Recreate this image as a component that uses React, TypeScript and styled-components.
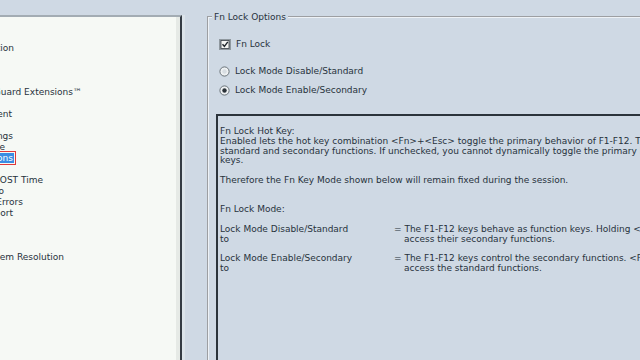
import styled, { createGlobalStyle } from 'styled-components';

const GlobalStyle = createGlobalStyle`
  html, body {
    margin: 0;
    padding: 0;
    background: #cfd9e4;
    overflow: hidden;
  }
  body {
    font-family: "DejaVu Sans", "Liberation Sans", sans-serif;
    font-size: 9px;
    color: #27323c;
  }
`;

const tree = [
    { id: 1, label: "General", end: 0 },
    { id: 2, label: "Boot Sequence", end: 0 },
    { id: 3, label: "System Configuration", end: 15 },
    { id: 4, label: "Video", end: 0 },
    { id: 5, label: "Security", end: 0 },
    { id: 6, label: "Secure Boot", end: 0 },
    { id: 7, label: "Intel Software Guard Extensions™", end: 83 },
    { id: 8, label: "Performance", end: 0 },
    { id: 9, label: "Power Management", end: 13 },
    { id: 10, label: "POST Behavior", end: 0 },
    { id: 11, label: "Adapter Warnings", end: 14 },
    { id: 12, label: "Numlock Enable", end: 6 },
    { id: 13, label: "Fn Lock Options", end: 14, selected: true },
    { id: 14, label: "Fastboot", end: 0 },
    { id: 15, label: "Extend BIOS POST Time", end: 44 },
    { id: 16, label: "Full Screen Logo", end: 5 },
    { id: 17, label: "Warnings and Errors", end: 24 },
    { id: 18, label: "Virtualization Support", end: 14 },
    { id: 19, label: "Wireless", end: 0 },
    { id: 20, label: "Maintenance", end: 0 },
    { id: 21, label: "System Logs", end: 0 },
    { id: 22, label: "SupportAssist System Resolution", end: 65 },
];

const Screen = styled.div`
    display: flex;
    align-items: flex-start;
    width: 640px;
    height: 360px;
    overflow: hidden;
`;

const TreePanel = styled.div`
    flex: 0 0 182px;
    box-sizing: border-box;
    margin-top: 15px;
    height: 360px;
    padding-top: 3px;
    background: #f6f9f5;
    border-top: 2px solid #a3acb3;
    border-right: 2px solid #343b43;
    box-shadow: inset -4px 0 0 #e6eae6, 3px 0 0 #dce4ea;
    overflow: hidden;
`;

const TreeRow = styled.div<{ $end: number }>`
    width: ${(p) => p.$end}px;
    height: 11px;
    line-height: 12px;
    display: flex;
    justify-content: flex-end;
    white-space: nowrap;
`;

const TreeLabel = styled.span<{ $selected?: boolean }>`
    flex-shrink: 0;
    padding-right: 1px;
    ${(p) => p.$selected && `
        background: #3a8de4;
        color: #ffffff;
        line-height: 10px;
        margin-top: 1px;
        height: 10px;
        outline: 1.5px solid #e0393b;
        outline-offset: 1px;
    `}
`;

const Group = styled.fieldset`
    flex: 0 0 auto;
    width: 520px;
    height: 400px;
    margin: 12px 0 0 25px;
    padding: 0 0 0 7px;
    border: 2px groove #eef2f6;
`;

const Legend = styled.legend`
    padding: 0 2px;
    margin-left: -4px;
    line-height: 10px;
`;

const OptionRow = styled.div<{ $gap: number }>`
    display: flex;
    align-items: center;
    gap: 5px;
    height: 12px;
    margin-top: ${(p) => p.$gap}px;
    padding-left: 3px;
    white-space: nowrap;
`;

const DescBox = styled.div`
    margin-top: 18px;
    height: 300px;
    border: 2px solid #2b333b;
    border-right: none;
    padding: 11px 0 0 2px;
    line-height: 9.8px;
    white-space: nowrap;
`;

const Blank = styled.div<{ $lines: number }>`
    height: ${(p) => p.$lines * 9.8}px;
`;

const ModeRow = styled.div`
    display: grid;
    grid-template-columns: 174px auto;
`;

const Indent = styled.div`
    padding-left: 10px;
`;

function CheckBox() {
    return (
        <svg width="12" height="11" viewBox="0 0 12 11">
            <rect x="0" y="0" width="12" height="11" fill="#8f989f" />
            <rect x="2" y="1.5" width="8" height="8" fill="#f4f6f4" stroke="#3a4148" strokeWidth="0.8" />
            <path d="M3.5 5.2 L5.4 7.3 L8.8 2.8" fill="none" stroke="#1f262c" strokeWidth="1.4" />
        </svg>
    );
}

function Radio({ on }: { on?: boolean }) {
    return (
        <svg width="11" height="11" viewBox="0 0 11 11">
            <circle cx="5.5" cy="5.5" r="4.6" fill="#eef1f3" stroke="#5e666d" strokeWidth="0.9" />
            {on ? <circle cx="5.5" cy="5.5" r="2.2" fill="#2a3138" /> : <circle cx="5.5" cy="5.5" r="2.2" fill="#d7dde2" />}
        </svg>
    );
}

export default function App() {
    return (
        <Screen>
            <GlobalStyle />
            <TreePanel>
                {tree.map((item) => (
                    <TreeRow key={item.id} $end={item.end}>
                        <TreeLabel $selected={item.selected}>{item.label}</TreeLabel>
                    </TreeRow>
                ))}
            </TreePanel>

            <Group>
                <Legend>Fn Lock Options</Legend>
                <OptionRow $gap={16}>
                    <CheckBox />
                    <span>Fn Lock</span>
                </OptionRow>
                <OptionRow $gap={15}>
                    <Radio />
                    <span>Lock Mode Disable/Standard</span>
                </OptionRow>
                <OptionRow $gap={7}>
                    <Radio on />
                    <span>Lock Mode Enable/Secondary</span>
                </OptionRow>

                <DescBox>
                    <div>Fn Lock Hot Key:</div>
                    <div>Enabled lets the hot key combination &lt;Fn&gt;+&lt;Esc&gt; toggle the primary behavior of F1-F12. The keys</div>
                    <div>standard and secondary functions. If unchecked, you cannot dynamically toggle the primary behavior of these</div>
                    <div>keys.</div>
                    <Blank $lines={1} />
                    <div>Therefore the Fn Key Mode shown below will remain fixed during the session.</div>
                    <Blank $lines={2} />
                    <div>Fn Lock Mode:</div>
                    <Blank $lines={1} />
                    <ModeRow>
                        <div>
                            <div>Lock Mode Disable/Standard</div>
                            <div>to</div>
                        </div>
                        <div>
                            <div>= The F1-F12 keys behave as function keys. Holding &lt;Fn&gt; is required</div>
                            <Indent>access their secondary functions.</Indent>
                        </div>
                    </ModeRow>
                    <Blank $lines={1} />
                    <ModeRow>
                        <div>
                            <div>Lock Mode Enable/Secondary</div>
                            <div>to</div>
                        </div>
                        <div>
                            <div>= The F1-F12 keys control the secondary functions. &lt;Fn&gt; is required</div>
                            <Indent>access the standard functions.</Indent>
                        </div>
                    </ModeRow>
                </DescBox>
            </Group>
        </Screen>
    );
}
